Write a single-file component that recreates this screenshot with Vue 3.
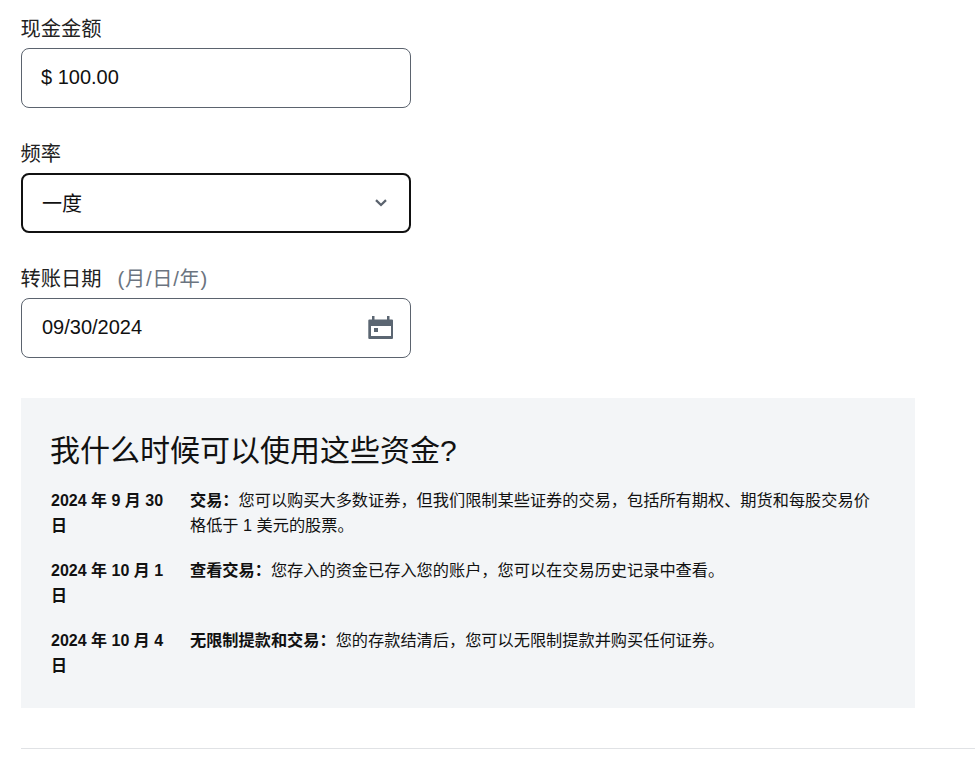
<script setup>
const rows = [
  { date: '2024 年 9 月 30 日', title: '交易：', text: '您可以购买大多数证券，但我们限制某些证券的交易，包括所有期权、期货和每股交易价格低于 1 美元的股票。' },
  { date: '2024 年 10 月 1 日', title: '查看交易：', text: '您存入的资金已存入您的账户，您可以在交易历史记录中查看。' },
  { date: '2024 年 10 月 4 日', title: '无限制提款和交易：', text: '您的存款结清后，您可以无限制提款并购买任何证券。' }
]
</script>

<template>
  <main class="page">
    <div class="form">
      <div class="field">
        <label class="label">现金金额</label>
        <div class="control"><span class="value amount">$ 100.00</span></div>
      </div>
      <div class="field">
        <label class="label">频率</label>
        <div class="control focused">
          <span class="value">一度</span>
          <svg class="chevron" width="12" height="8" viewBox="0 0 12 8"><path d="M1 1.200 6 6l5-4.800" fill="none" stroke="#5b636e" stroke-width="2.300"/></svg>
        </div>
      </div>
      <div class="field">
        <label class="label">转账日期<span class="hint">(月/日/年)</span></label>
        <div class="control">
          <span class="value">09/30/2024</span>
          <svg class="calendar" width="26" height="26" viewBox="0 0 26 26"><path fill="#5b6672" fill-rule="evenodd" d="M4 1h2.500v3.500h12.500V1h2.500v3.500h2.500a1 1 0 0 1 1 1V23a1 1 0 0 1-1 1H1.300a1 1 0 0 1-1-1V5.500a1 1 0 0 1 1-1H4V1Zm-1 10v10h20V11H3Z"/><rect x="6" y="13" width="4" height="4" fill="#5b6672"/></svg>
        </div>
      </div>
    </div>

    <section class="panel">
      <h2 class="title">我什么时候可以使用这些资金?</h2>
      <div v-for="row in rows" :key="row.date" class="row">
        <strong class="date">{{ row.date }}</strong>
        <p class="body"><strong>{{ row.title }}</strong>{{ row.text }}</p>
      </div>
    </section>

    <hr class="rule" />
  </main>
</template>

<style scoped>
.page {
  padding-left: 21px;
  padding-top: 16px;
  color: #111;
  font-family: "Liberation Sans", "Noto Sans CJK SC", sans-serif;
}
.form {
  width: 390px;
  display: flex;
  flex-direction: column;
  gap: 33px;
}
.field {
  display: flex;
  flex-direction: column;
}
.label {
  font-size: 20.25px;
  line-height: 27px;
  height: 32px;
  margin-left: -0.5px;
  color: #222;
}
.hint {
  margin-left: 16px;
  letter-spacing: 0.7px;
  color: #6b7480;
}
.control {
  height: 60px;
  box-sizing: border-box;
  border: 1px solid #5b636e;
  border-radius: 8px;
  padding: 0 20px;
  display: flex;
  align-items: center;
  justify-content: space-between;
  background: #fff;
}
.focused {
  border: 2px solid #111;
  padding: 0 19px;
}
.value {
  font-size: 20px;
  margin-bottom: 2px;
  color: #111;
}
.amount {
  margin-left: -1px;
}
.chevron {
  margin-right: 3px;
}
.calendar {
  margin-right: -4px;
}
.panel {
  margin-top: 40px;
  width: 894px;
  height: 310px;
  box-sizing: border-box;
  padding: 32px 30px 0;
  background: #f3f5f7;
}
.title {
  margin: 0 0 16px -1px;
  font-size: 30px;
  font-weight: 400;
  line-height: 42px;
  color: #111;
}
.row {
  display: flex;
  font-size: 16px;
  line-height: 25px;
  margin-bottom: 20px;
}
.date {
  width: 119px;
  flex: none;
  margin-right: 20px;
}
.body {
  margin: 0;
  width: 690px;
  font-size: 16.2px;
}
.rule {
  margin: 40px 0 0;
  border: 0;
  border-top: 1px solid #e0e2e5;
}
</style>

<style>
body { margin: 0; background: #fff; }
</style>
